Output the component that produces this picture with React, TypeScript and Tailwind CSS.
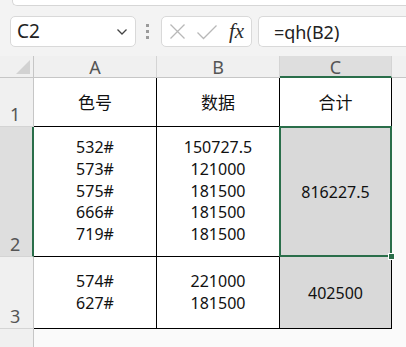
import React from "react";

const cellFont = { fontFamily: '"Noto Sans", "Noto Sans CJK SC", sans-serif' };
const cjkFont = { fontFamily: '"Noto Sans CJK SC", "Noto Sans", sans-serif' };

function Lines({ items }: { items: string[] }) {
  return (
    <div className="flex flex-col items-center leading-[21.7px]">
      {items.map((t, i) => (
        <span key={i}>{t}</span>
      ))}
    </div>
  );
}

function ColHead({ label, active }: { label: string; active?: boolean }) {
  return (
    <div
      className={
        "flex items-center justify-center text-[18px] text-[#555] border-r border-[#d4d4d4] " +
        (active
          ? "bg-[#dedede] border-b-2 border-b-[#2a6e4a] text-[#3b6e55]"
          : "bg-[#f0f0f0] border-b border-b-[#c6c6c6]")
      }
    >
      <span className="leading-none pt-[1px]">{label}</span>
    </div>
  );
}

function RowHead({ label, active }: { label: string; active?: boolean }) {
  return (
    <div
      className={
        "flex items-end pl-[10px] pb-[3px] text-[18px] leading-none text-[#555] border-b border-[#d4d4d4] " +
        (active
          ? "bg-[#dedede] border-r-2 border-r-[#2a6e4a]"
          : "bg-[#f0f0f0] border-r border-r-[#c6c6c6]")
      }
    >
      {label}
    </div>
  );
}

const cell = "bg-white border-r border-b border-black flex items-center justify-center text-[16px] text-[#111]";

export default function App() {
  return (
    <div
      className="w-[406px] h-[347px] overflow-hidden bg-[#f3f3f3] flex flex-col"
      style={{ fontFamily: '"Noto Sans", "Noto Sans CJK SC", sans-serif' }}
    >
      {/* toolbar strip */}
      <div className="h-[56px] flex flex-col shrink-0">
        <div className="ml-[12px] h-[6px] bg-white border-l border-b border-[#d6d6d6] rounded-bl-[5px]" />
        <div className="mt-[10px] flex items-start">
          {/* name box */}
          <div className="ml-[10px] w-[126px] h-[31px] bg-white border border-[#d9d9d9] rounded-[5px] flex items-center justify-between pl-[6px] pr-[7px]">
            <span className="text-[19px] text-[#222] leading-none">C2</span>
            <svg width="12" height="8" viewBox="0 0 12 8" className="mt-[1px]">
              <path d="M1.5 1.5 L6 6 L10.5 1.5" fill="none" stroke="#444" strokeWidth="1.3" />
            </svg>
          </div>
          {/* drag handle */}
          <div className="ml-[10px] mt-[8px] flex flex-col gap-[3px]">
            <span className="w-[3px] h-[3px] bg-[#9a9a9a]" />
            <span className="w-[3px] h-[3px] bg-[#9a9a9a]" />
            <span className="w-[3px] h-[3px] bg-[#9a9a9a]" />
          </div>
          {/* cancel / enter / fx */}
          <div className="ml-[12px] w-[91px] h-[31px] bg-white border border-[#d9d9d9] rounded-[5px] flex items-center pl-[7px]">
            <svg width="17" height="17" viewBox="0 0 17 17">
              <path d="M1.5 1.5 L15.5 15.5 M15.5 1.5 L1.5 15.5" stroke="#b8b8b8" strokeWidth="1.3" fill="none" />
            </svg>
            <svg width="22" height="16" viewBox="0 0 22 16" className="ml-[10px]">
              <path d="M1.5 8.5 L7.5 14.5 L20.5 1.5" stroke="#b8b8b8" strokeWidth="1.3" fill="none" />
            </svg>
            <span
              className="ml-[11px] text-[21px] italic text-[#2b2b2b] leading-none"
              style={{ fontFamily: '"Liberation Serif", serif' }}
            >
              fx
            </span>
          </div>
          {/* formula input */}
          <div className="ml-[6px] flex-1 h-[31px] bg-white border border-[#d9d9d9] border-r-0 rounded-l-[5px] flex items-center pl-[15px]">
            <span className="text-[18px] text-[#222] leading-none">=qh(B2)</span>
          </div>
        </div>
      </div>

      {/* sheet grid */}
      <div
        className="grid flex-1 bg-[#fafafa]"
        style={{
          gridTemplateColumns: "34px 123px 123px 112px 1fr",
          gridTemplateRows: "22px 49px 130px 72px 1fr",
        }}
      >
        {/* header row */}
        <div className="relative bg-[#f0f0f0] border-r border-b border-[#c6c6c6]">
          <svg width="14" height="14" viewBox="0 0 14 14" className="absolute right-[3px] bottom-[3px]">
            <path d="M14 0 L14 14 L0 14 Z" fill="#d2d2d2" />
          </svg>
        </div>
        <ColHead label="A" />
        <ColHead label="B" />
        <ColHead label="C" active />
        <div className="bg-[#f0f0f0] border-b border-[#c6c6c6]" />

        {/* row 1 */}
        <RowHead label="1" />
        <div className={cell + " text-[17px]"} style={cjkFont}>色号</div>
        <div className={cell + " text-[17px]"} style={cjkFont}>数据</div>
        <div className={cell + " text-[17px]"} style={cjkFont}>合计</div>
        <div />

        {/* row 2 */}
        <RowHead label="2" active />
        <div className={cell} style={cellFont}>
          <Lines items={["532#", "573#", "575#", "666#", "719#"]} />
        </div>
        <div className={cell} style={cellFont}>
          <Lines items={["150727.5", "121000", "181500", "181500", "181500"]} />
        </div>
        <div className={cell + " relative !bg-[#d9d9d9]"} style={cellFont}>
          816227.5
          {/* active cell outline with fill handle */}
          <div className="absolute -left-[1px] -top-[1px] -right-[1px] -bottom-[1px] border-2 border-[#2a6e4a] pointer-events-none" />
          <div className="absolute -right-[4px] -bottom-[4px] w-[7px] h-[7px] bg-[#2a6e4a] border border-white" />
        </div>
        <div />

        {/* row 3 */}
        <RowHead label="3" />
        <div className={cell} style={cellFont}>
          <Lines items={["574#", "627#"]} />
        </div>
        <div className={cell} style={cellFont}>
          <Lines items={["221000", "181500"]} />
        </div>
        <div className={cell + " !bg-[#d9d9d9]"} style={cellFont}>402500</div>
        <div />

        {/* blank area below */}
        <div className="bg-[#f0f0f0] border-r border-[#c6c6c6]" />
        <div />
        <div />
        <div />
        <div />
      </div>
    </div>
  );
}
